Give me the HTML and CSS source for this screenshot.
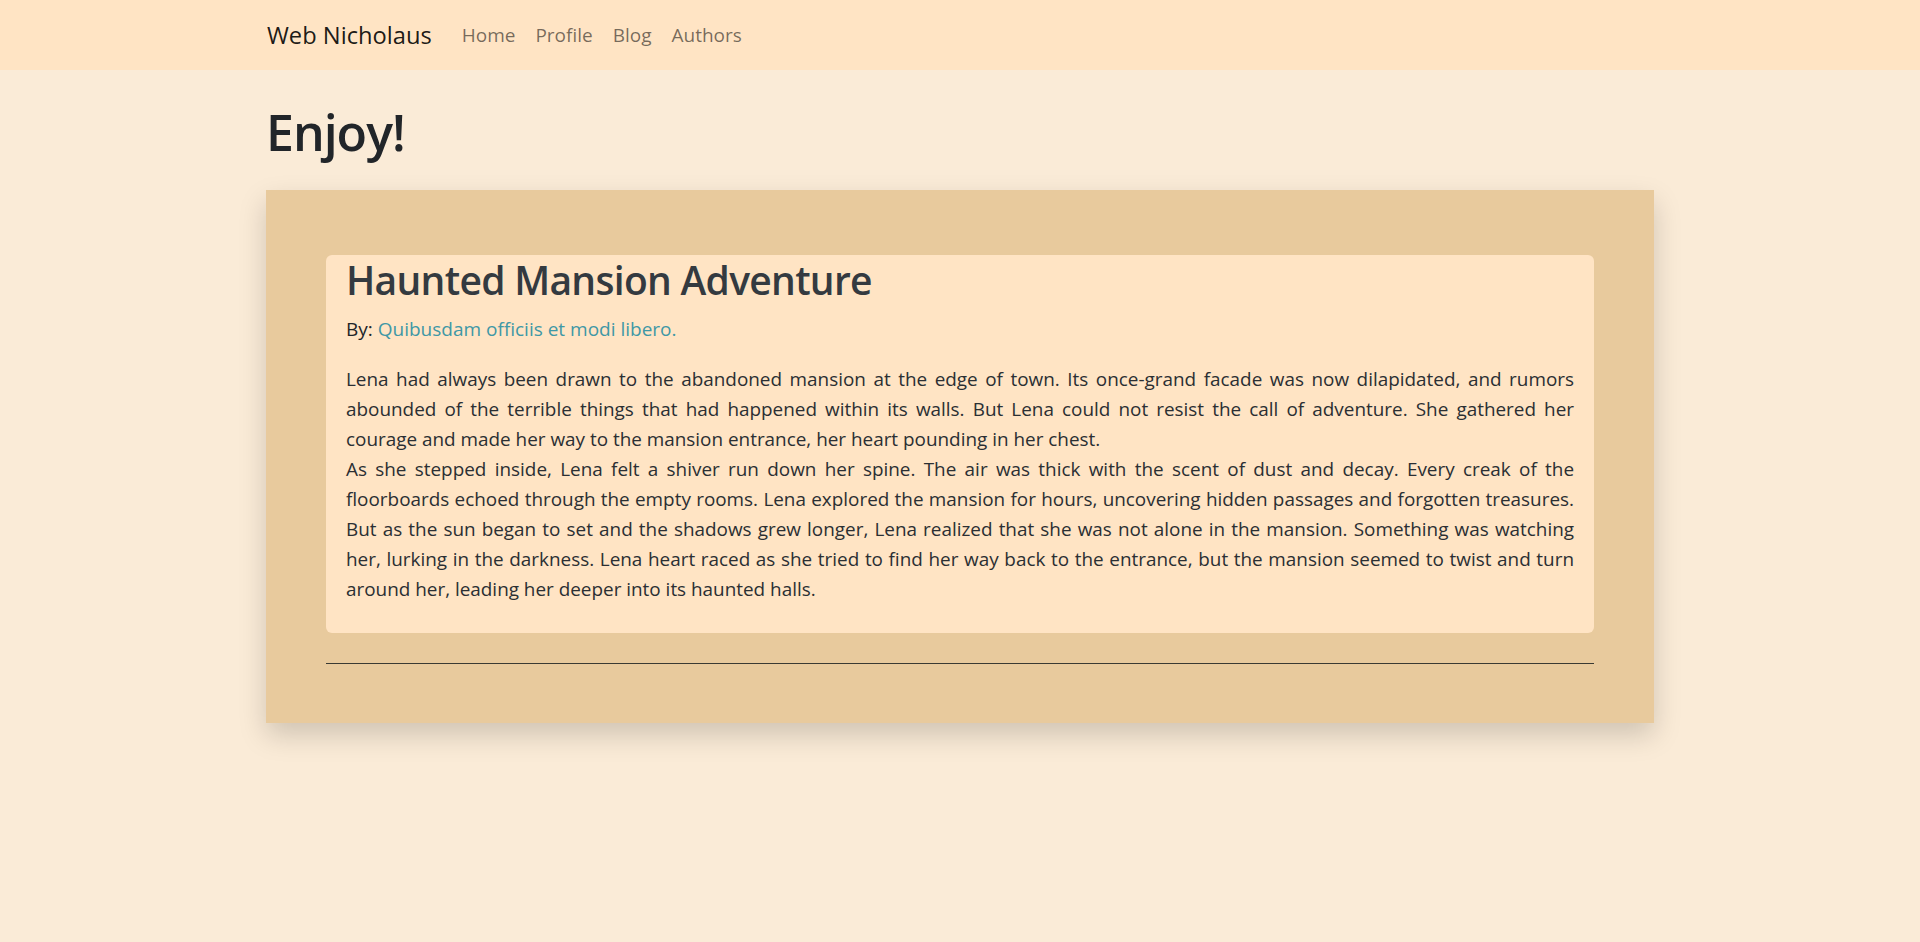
FILE: index.html
```html
<!DOCTYPE html>
<html lang="en">
<head>
<meta charset="utf-8">
<title>Web Nicholaus</title>
<link rel="stylesheet" href="styles.css">
</head>
<body>
<nav class="navbar">
  <div class="container nav-inner">
    <a class="brand" href="#">Web Nicholaus</a>
    <ul class="nav-links">
      <li><a href="#">Home</a></li>
      <li><a href="#">Profile</a></li>
      <li><a href="#">Blog</a></li>
      <li><a href="#">Authors</a></li>
    </ul>
  </div>
</nav>
<main class="container page">
  <h1 class="page-title">Enjoy!</h1>
  <section class="board">
    <article class="story">
      <h2 class="story-title">Haunted Mansion Adventure</h2>
      <p class="byline">By: <a href="#">Quibusdam officiis et modi libero.</a></p>
      <p class="story-body">Lena had always been drawn to the abandoned mansion at the edge of town. Its once-grand facade was now dilapidated, and rumors abounded of the terrible things that had happened within its walls. But Lena could not resist the call of adventure. She gathered her courage and made her way to the mansion entrance, her heart pounding in her chest.<br>As she stepped inside, Lena felt a shiver run down her spine. The air was thick with the scent of dust and decay. Every creak of the floorboards echoed through the empty rooms. Lena explored the mansion for hours, uncovering hidden passages and forgotten treasures. But as the sun began to set and the shadows grew longer, Lena realized that she was not alone in the mansion. Something was watching her, lurking in the darkness. Lena heart raced as she tried to find her way back to the entrance, but the mansion seemed to twist and turn around her, leading her deeper into its haunted halls.</p>
    </article>
    <hr class="divider">
  </section>
</main>
</body>
</html>
```

FILE: styles.css
```css
* { box-sizing: border-box; }

html {
  background: #faebd7;
}

body {
  margin: 0;
  min-height: 100vh;
  background: #faebd7;
  font-family: "Open Sans", "Noto Sans", sans-serif;
  font-size: 19px;
  line-height: 30px;
  color: #212529;
}

.container {
  width: 1388px;
  margin: 0 auto;
}

.page {
  padding-bottom: 60px;
}

.navbar {
  background: #ffe4c4;
  height: 70px;
}

.nav-inner {
  height: 70px;
  display: flex;
  align-items: center;
}

.brand {
  font-size: 23.7px;
  color: rgba(0, 0, 0, 0.9);
  text-decoration: none;
  margin-right: 20px;
  padding-left: 1px;
}

.nav-links {
  display: flex;
  list-style: none;
  margin: 0;
  padding: 0;
}

.nav-links a {
  display: block;
  padding: 0 10px;
  color: rgba(0, 0, 0, 0.55);
  text-decoration: none;
  font-size: 19px;
}

.page-title {
  margin: 32px 0 28px;
  font-size: 50px;
  line-height: 60px;
  font-weight: 600;
  letter-spacing: -1px;
  color: #212529;
}

.board {
  background: #e8ca9d;
  padding: 65px 60px 59px;
  box-shadow: 0 12px 26px rgba(0, 0, 0, 0.17);
}

.story {
  background: #ffe4c4;
  border-radius: 6px;
  padding: 0 20px 9px;
}

.story-title {
  margin: 0 0 9px;
  font-size: 39px;
  line-height: 50px;
  font-weight: 600;
  letter-spacing: -0.7px;
  color: #343a40;
}

.byline {
  margin: 0 0 20px;
}

.byline a {
  color: #3f98a6;
  text-decoration: none;
}

.story-body {
  margin: 0 0 20px;
  font-size: 18.9px;
  text-align: justify;
  color: #2b2f33;
}

.divider {
  margin: 30px 0 0;
  border: 0;
  border-top: 1px solid #3a3a33;
}
```
